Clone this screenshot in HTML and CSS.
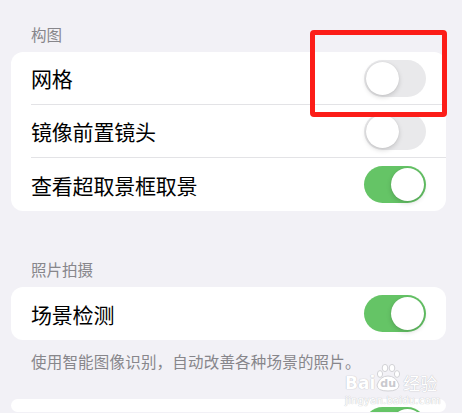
FILE: index.html
```html
<!DOCTYPE html>
<html lang="zh-CN">
<head>
<meta charset="utf-8">
<link rel="stylesheet" href="styles.css">
</head>
<body>
<div class="page">
  <div class="section-header first">构图</div>
  <div class="card">
    <div class="row"><div class="row-inner sep"><span class="label">网格</span><span class="switch"></span></div></div>
    <div class="row"><div class="row-inner sep"><span class="label">镜像前置镜头</span><span class="switch"></span></div></div>
    <div class="row"><div class="row-inner"><span class="label">查看超取景框取景</span><span class="switch on"></span></div></div>
  </div>

  <div class="section-header second">照片拍摄</div>
  <div class="card">
    <div class="row"><div class="row-inner"><span class="label">场景检测</span><span class="switch on"></span></div></div>
  </div>
  <div class="section-footer">使用智能图像识别，自动改善各种场景的照片。</div>

  <div class="card last">
    <div class="row"><div class="row-inner"><span class="label"></span><span class="switch on"></span></div></div>
  </div>
</div>

<div class="highlight"></div>

<div class="watermark">
  <div class="wm-top">
    <span class="wm-bai">Bai</span>
    <span class="wm-paw">
      <svg width="26" height="30" viewBox="0 0 26 30">
        <g fill="#fff" stroke="#d2d2d6" stroke-width="1">
          <ellipse cx="5" cy="11" rx="2.6" ry="3.4"/>
          <ellipse cx="10" cy="5" rx="2.8" ry="3.6"/>
          <ellipse cx="17" cy="5" rx="2.8" ry="3.6"/>
          <ellipse cx="22" cy="11" rx="2.6" ry="3.4"/>
          <path d="M2 22 Q5 13 13 13 Q21 13 24 22 Q24 28 13 28 Q2 28 2 22 Z"/>
        </g>
      </svg>
      <span class="wm-du">du</span>
    </span>
    <span class="wm-jy">经验</span>
  </div>
  <div class="wm-url">jingyan.baidu.com</div>
</div>
</body>
</html>
```

FILE: styles.css
```css
html, body {
  margin: 0;
  padding: 0;
}
body {
  background: #f2f1f6;
  font-family: "Noto Sans CJK SC", "Noto Sans", sans-serif;
  width: 462px;
  height: 413px;
  overflow: hidden;
  position: relative;
}
.page {
  padding-left: 11px;
  width: 435px;
}
.section-header {
  color: #87868b;
  font-size: 15.5px;
  line-height: 20px;
  padding: 0 20px 8px;
}
.section-header.first {
  padding-top: 24px;
}
.section-header.second {
  margin-top: 48px;
}
.card {
  background: #fff;
  border-radius: 12px;
  overflow: hidden;
}
.card.last {
  height: 13px;
}
.row {
  padding-left: 20px;
}
.row-inner {
  height: 53px;
  box-sizing: border-box;
  display: flex;
  align-items: center;
  justify-content: space-between;
  padding-right: 20px;
}
.row-inner.sep {
  border-bottom: 1px solid #e3e3e6;
}
.label {
  font-size: 21px;
  color: #000;
  letter-spacing: -0.2px;
}
.switch {
  width: 62px;
  height: 37px;
  border-radius: 19px;
  background: #e9e9eb;
  position: relative;
  flex: none;
}
.switch::after {
  content: "";
  position: absolute;
  top: 2px;
  left: 2px;
  width: 33px;
  height: 33px;
  border-radius: 50%;
  background: #fff;
  box-shadow: 0 2px 5px rgba(0,0,0,0.16), 0 0 1px rgba(0,0,0,0.12);
}
.switch.on {
  background: #65c466;
}
.switch.on::after {
  left: 27px;
}
.card.last .row-inner {
  align-items: flex-start;
  padding-top: 8px;
}
.section-footer {
  color: #87868b;
  font-size: 15.5px;
  line-height: 20px;
  padding: 0 20px;
  margin-top: 11px;
  margin-bottom: 28px;
  letter-spacing: 0.2px;
}
.highlight {
  position: absolute;
  left: 310px;
  top: 30px;
  width: 127px;
  height: 77px;
  border: 5px solid #fc1d18;
  border-radius: 4px;
}
.watermark {
  position: absolute;
  left: 345px;
  top: 361px;
  width: 110px;
  font-family: "DejaVu Sans", sans-serif;
  color: #fff;
  text-shadow: 0 0 1px #c4c4c9, 0 0 1px #c4c4c9;
}
.wm-top {
  display: flex;
  flex-wrap: nowrap;
  align-items: flex-end;
  height: 32px;
}
.wm-bai {
  font-size: 17px;
  font-weight: bold;
  line-height: 20px;
}
.wm-paw {
  position: relative;
  width: 26px;
  height: 30px;
  flex: none;
}
.wm-paw svg {
  position: absolute;
  left: 0;
  top: 0;
}
.wm-du {
  position: absolute;
  left: 5px;
  top: 14px;
  font-size: 11px;
  font-weight: bold;
  color: #c9c9ce;
  text-shadow: none;
}
.wm-jy {
  font-family: "Noto Sans CJK SC", sans-serif;
  font-size: 17px;
  line-height: 20px;
  margin-left: 2px;
  white-space: nowrap;
}
.wm-url {
  font-size: 10px;
  line-height: 12px;
  margin-top: 2px;
  letter-spacing: 0.2px;
  white-space: nowrap;
}
```
